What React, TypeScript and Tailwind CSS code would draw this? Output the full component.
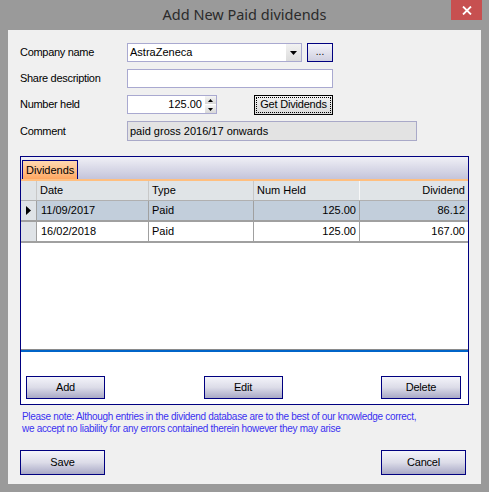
import React from 'react';

interface Row {
    date: string;
    type: string;
    held: string;
    dividend: string;
}

const rows: Row[] = [
    { date: '11/09/2017', type: 'Paid', held: '125.00', dividend: '86.12' },
    { date: '16/02/2018', type: 'Paid', held: '125.00', dividend: '167.00' },
];

const font = "font-['Liberation_Sans',Arial,sans-serif]";

function NavyButton({ label, w, h }: { label: string; w: string; h: string }) {
    return (
        <button
            className={`${w} ${h} border border-[#000080] bg-gradient-to-b from-[#f4f4fa] via-[#dcdce8] to-[#a9a9c6] text-[11px] tracking-[-0.2px] text-black flex items-center justify-center`}
        >
            {label}
        </button>
    );
}

export default function App() {
    return (
        <div className={`w-[489px] h-[492px] bg-[#9a9a9a] flex flex-col ${font} text-[11px] text-black`}>
            {/* title bar */}
            <div className="relative h-[30px] flex items-center justify-center">
                <span className="font-['Noto_Sans',sans-serif] text-[14.5px] text-[#2a2a2a] pb-[1px]">Add New Paid dividends</span>
                <div className="absolute right-[7px] top-0 w-[31px] h-[20px] bg-[#c75050] flex items-center justify-center">
                    <svg width="10" height="9" viewBox="0 0 10 9" fill="none" stroke="white" strokeWidth="1.8">
                        <path d="M1 0.5 9 8.5M9 0.5 1 8.5" />
                    </svg>
                </div>
            </div>

            {/* client area */}
            <div className="ml-[8px] w-[473px] h-[454px] bg-[#f0f0f0] flex flex-col pl-[12px]">
                <div className="flex flex-col gap-[7px] pt-[13px]">
                    <div className="flex items-center h-[19px]">
                        <span className="w-[107px] tracking-[-0.3px]">Company name</span>
                        <div className="w-[175px] h-[19px] border border-[#a9a9d0] bg-white flex items-center">
                            <span className="flex-1 pl-[2px]">AstraZeneca</span>
                            <div className="w-[15px] h-[17px] bg-gradient-to-b from-[#f2f2f2] to-[#dcdcdc] flex items-center justify-center">
                                <svg width="7" height="4" viewBox="0 0 7 4"><path d="M0 0h7L3.5 4z" fill="black" /></svg>
                            </div>
                        </div>
                        <div className="ml-[5px] w-[26px] h-[19px] border border-[#000080] bg-gradient-to-b from-[#f4f4fa] to-[#cfcfe0] flex items-end justify-center pb-[4px]">
                            <span className="leading-none text-[10px]">...</span>
                        </div>
                    </div>

                    <div className="flex items-center h-[19px]">
                        <span className="w-[107px] tracking-[-0.3px]">Share description</span>
                        <div className="w-[206px] h-[19px] border border-[#a9a9d0] bg-white" />
                    </div>

                    <div className="flex items-center h-[19px]">
                        <span className="w-[107px] tracking-[-0.3px]">Number held</span>
                        <div className="w-[90px] h-[19px] border border-[#a9a9d0] bg-white flex items-center">
                            <span className="flex-1 text-right pr-[3px]">125.00</span>
                            <div className="w-[11px] h-[17px] flex flex-col gap-[1px]">
                                <div className="flex-1 bg-gradient-to-b from-[#f4f4f4] to-[#d8d8d8] flex items-center justify-center">
                                    <svg width="5" height="3" viewBox="0 0 5 3"><path d="M0 3h5L2.5 0z" fill="black" /></svg>
                                </div>
                                <div className="flex-1 bg-gradient-to-b from-[#f4f4f4] to-[#d8d8d8] flex items-center justify-center">
                                    <svg width="5" height="3" viewBox="0 0 5 3"><path d="M0 0h5L2.5 3z" fill="black" /></svg>
                                </div>
                            </div>
                        </div>
                        <button className="ml-[37px] w-[79px] h-[20px] border border-black bg-gradient-to-b from-[#f2f2f2] to-[#dadada] p-[1px]">
                            <div className="w-full h-full border border-dotted border-black flex items-center justify-center whitespace-nowrap tracking-[-0.2px]">
                                Get Dividends
                            </div>
                        </button>
                    </div>

                    <div className="flex items-center h-[20px]">
                        <span className="w-[107px] tracking-[-0.3px]">Comment</span>
                        <div className="w-[290px] h-[20px] border border-[#a9a9c8] bg-[#e3e3e3] flex items-center pl-[2px]">
                            paid gross 2016/17 onwards
                        </div>
                    </div>
                </div>

                {/* tab panel */}
                <div className="mt-[15px] w-[449px] h-[249px] border border-[#000080] flex flex-col bg-white">
                    <div className="h-[22px] bg-gradient-to-b from-[#f0f0f6] to-[#c4c4da] flex items-end pl-[1px]">
                        <div className="h-[19px] px-[3px] border border-b-0 border-[#000080] bg-gradient-to-b from-[#ffd8b0] to-[#ffa862] flex items-center">
                            Dividends
                        </div>
                    </div>
                    <div className="h-[2px] bg-[#ffbf80]" />

                    {/* grid */}
                    <div className="h-[169px] flex flex-col border-b border-[#8a8a8a]">
                        <div className="h-[20px] flex bg-[#e0e4e7] border-b border-[#b0b0b0]">
                            <div className="w-[15px]" />
                            <div className="w-[112px] border-l border-[#c8c8c8] pl-[3px] flex items-center">Date</div>
                            <div className="w-[105px] border-l border-[#c8c8c8] pl-[3px] flex items-center">Type</div>
                            <div className="w-[106px] border-l border-[#c8c8c8] pl-[3px] flex items-center">Num Held</div>
                            <div className="flex-1 border-l border-[#f8f8f8] pr-[3px] flex items-center justify-end">Dividend</div>
                        </div>
                        {rows.map((r, i) => (
                            <div
                                key={i}
                                className={`h-[21px] flex border-b-2 border-[#a0a0a0] ${i === 0 ? 'bg-[#c2cedb]' : 'bg-white'}`}
                            >
                                <div className="w-[15px] bg-[#dfe3e7] flex items-center justify-center">
                                    {i === 0 && (
                                        <svg width="5" height="9" viewBox="0 0 5 9"><path d="M0 0v9l5-4.5z" fill="black" /></svg>
                                    )}
                                </div>
                                <div className="w-[112px] border-l border-[#a0a0a0] pl-[4px] flex items-center">{r.date}</div>
                                <div className="w-[105px] border-l border-[#a0a0a0] pl-[3px] flex items-center">{r.type}</div>
                                <div className="w-[106px] border-l border-[#a0a0a0] pr-[3px] flex items-center justify-end">{r.held}</div>
                                <div className="flex-1 border-l border-[#a0a0a0] pr-[3px] flex items-center justify-end">{r.dividend}</div>
                            </div>
                        ))}
                    </div>

                    <div className="flex-1 border-t-2 border-[#0064c8] flex items-start justify-between pl-[5px] pr-[7px] pt-[24px]">
                        <NavyButton label="Add" w="w-[79px]" h="h-[23px]" />
                        <NavyButton label="Edit" w="w-[79px]" h="h-[23px]" />
                        <NavyButton label="Delete" w="w-[80px]" h="h-[23px]" />
                    </div>
                </div>

                <div className="mt-[6px] pl-[2px] text-[10px] leading-[12px] tracking-[-0.3px] text-[#3a30f0]">
                    <div>Please note: Although entries in the dividend database are to the best of our knowledge correct,</div>
                    <div>we accept no liability for any errors contained therein however they may arise</div>
                </div>

                <div className="mt-[15px] flex justify-between w-[446px]">
                    <NavyButton label="Save" w="w-[85px]" h="h-[25px]" />
                    <NavyButton label="Cancel" w="w-[85px]" h="h-[25px]" />
                </div>
            </div>
        </div>
    );
}
